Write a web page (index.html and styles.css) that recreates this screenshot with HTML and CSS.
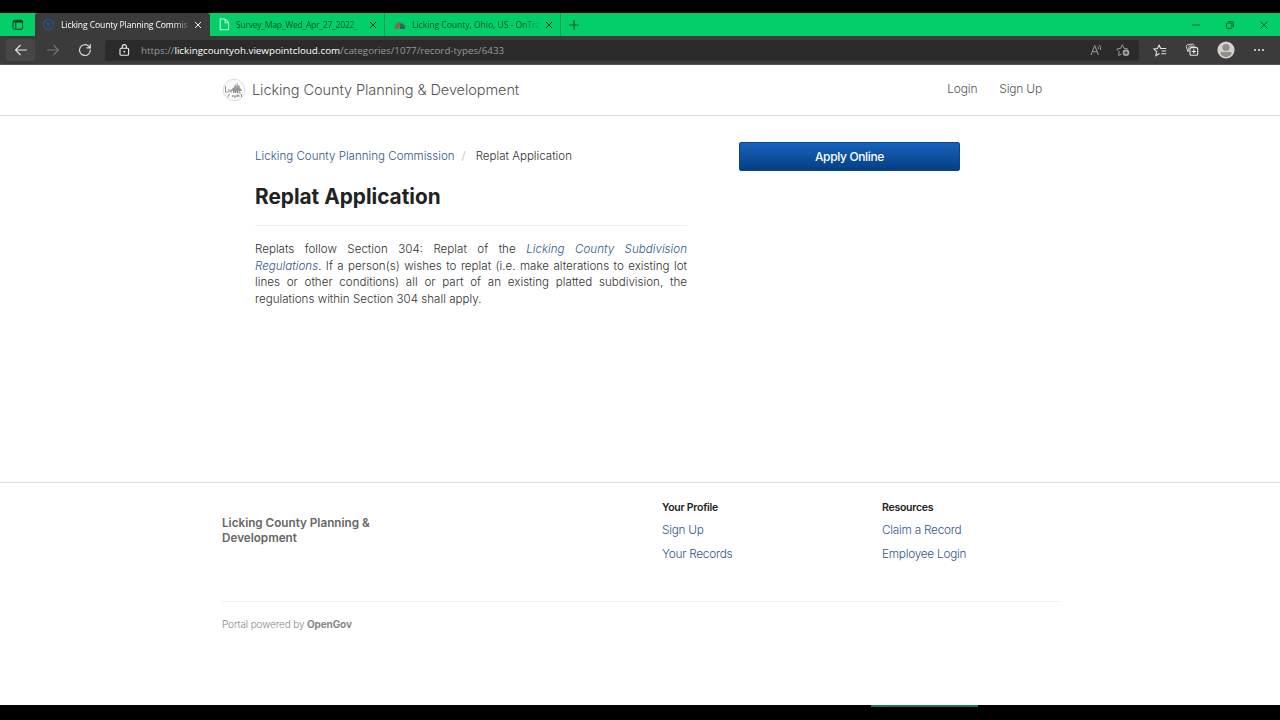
FILE: index.html
```html
<!DOCTYPE html>
<html lang="en">
<head>
  <meta charset="UTF-8" />
  <meta name="viewport" content="width=device-width, initial-scale=1.0"/>
  <title>Licking County Planning Commission</title>

  <link rel="stylesheet" href="styles.css">
</head>

<body>

<!-- TABS -->
<div class="tabs">
  <div class="tab-menu">
    <svg width="12" height="12" viewBox="0 0 12 12"><rect x="1" y="1.3" width="9.6" height="9" rx="1.5" fill="none" stroke="#083d20" stroke-width="1"/><path d="M1 2.6h9.6" stroke="#083d20" stroke-width="2"/><path d="M3.8 3.5v6.5" stroke="#083d20" stroke-width=".9"/></svg>
  </div>

  <div class="tab active">
    <svg class="favicon" width="13" height="13" viewBox="0 0 13 13"><circle cx="6.5" cy="6.5" r="5.1" fill="none" stroke="#25508c" stroke-width="1.4"/><path d="M4 4.8h5L6.5 9z" fill="#25508c"/></svg>
    <span class="tab-title">Licking County Planning Commis</span>
    <svg class="close" width="8" height="8" viewBox="0 0 8 8"><path d="M1 1l6 6M7 1l-6 6" stroke="#eee" stroke-width="1"/></svg>
  </div>

  <div class="tab second">
    <svg class="favicon" width="11" height="13" viewBox="0 0 11 13"><path d="M1.2 1h5l3.4 3.4v7.4H1.2zM6 1v3.7h3.6" fill="none" stroke="#b9f5cf" stroke-width="1.1"/></svg>
    <span class="tab-title">Survey_Map_Wed_Apr_27_2022_</span>
    <svg class="close" width="8" height="8" viewBox="0 0 8 8"><path d="M1 1l6 6M7 1l-6 6" stroke="#07381d" stroke-width="1"/></svg>
  </div>

  <div class="tab third">
    <svg class="favicon" width="13" height="10" viewBox="0 0 13 10"><path d="M1 8.8C2 5 4 2.5 6.8 1.5L5.5 8.8z" fill="#79704a"/><path d="M3.2 8.8L6 3.6M5.4 8.8l1.8-6" stroke="#b34f4a"/><path d="M7 8.8V4l2-1 3 3v2.8z" fill="#217448"/><path d="M7.5 8.3h4.5" stroke="#345282" stroke-width="1.3"/></svg>
    <span class="tab-title">Licking County, Ohio, US - OnTra</span>
    <svg class="close" width="8" height="8" viewBox="0 0 8 8"><path d="M1 1l6 6M7 1l-6 6" stroke="#07381d" stroke-width="1"/></svg>
  </div>

  <svg class="new-tab" width="10" height="10" viewBox="0 0 10 10"><path d="M5 0v10M0 5h10" stroke="#0a5a2e" stroke-width="1.1"/></svg>

  <div class="window-buttons">
    <svg width="8" height="8" viewBox="0 0 8 8"><path d="M0 4h8" stroke="#075f2d"/></svg>
    <svg width="8" height="8" viewBox="0 0 8 8"><rect x=".6" y="2" width="5.4" height="5.4" rx="1" fill="none" stroke="#075f2d"/><path d="M2 .7h4q1.4 0 1.4 1.4v4" fill="none" stroke="#075f2d"/></svg>
    <svg width="8" height="8" viewBox="0 0 8 8"><path d="M.5.5l7 7M7.5.5l-7 7" stroke="#075f2d"/></svg>
  </div>
</div>

<!-- TOOLBAR -->
<div class="toolbar">
  <div class="tool back">
    <svg width="14" height="12" viewBox="0 0 14 12"><path d="M13 6H1.5M6.500 1l-5 5 5 5" fill="none" stroke="#e4e4e4" stroke-width="1.1"/></svg>
  </div>
  <div class="tool forward">
    <svg width="14" height="12" viewBox="0 0 14 12"><path d="M1 6h11.5M7.500 1l5 5-5 5" fill="none" stroke="#757575" stroke-width="1.1"/></svg>
  </div>
  <div class="tool reload">
    <svg width="14" height="14" viewBox="0 0 14 14"><path d="M12.3 6.500A5.400 5.400 0 1 1 10.7 3.200L12 4.500M12.3 1v3.900H8.500" fill="none" stroke="#e4e4e4" stroke-width="1.1"/></svg>
  </div>

  <div class="address">
    <svg class="lock" width="11" height="12" viewBox="0 0 11 12"><rect x="1" y="4.200" width="8.600" height="7" rx="1" fill="none" stroke="#eee" stroke-width="1.1"/><path d="M3.200 4V2.700a2.100 2.100 0 0 1 4.200 0V4" fill="none" stroke="#eee" stroke-width="1.1"/><circle cx="5.300" cy="7.700" r=".9" fill="#eee"/></svg>
    <span class="url">https://<b>lickingcountyoh.viewpointcloud.com</b>/categories/1077/record-types/6433</span>
    <svg class="read" width="13" height="12" viewBox="0 0 13 12"><path d="M1 11L4.700 1.500l3.700 9.500M2.300 7.700h4.800M7.700 2.500q1.200 1 .5 2.700M9.300 1q2.400 2.200.9 5" fill="none" stroke="#9b9b9b"/></svg>
    <svg class="add-star" width="14" height="14" viewBox="0 0 14 14"><path d="M5.600 11l-3 1.500.6-3.800L.8 6l3.700-.6L6.300 1.700 8.100 5.400l4 .6" fill="none" stroke="#9b9b9b"/><circle cx="10" cy="9.800" r="3.300" fill="#aaa"/><path d="M10 8v3.600M8.200 9.800h3.600" stroke="#2b2b2b" stroke-width=".9"/></svg>
  </div>

  <div class="tools-right">
    <svg width="14" height="13" viewBox="0 0 14 13"><path d="M6.500 9.600l-3.600 2 .7-4L1 5l3.500-.5L6.100 1.200 7.700 4.500h5.500M8.700 7h4.500M8.200 9.700h5" fill="none" stroke="#e2e2e2" stroke-width="1.1"/></svg>
    <svg width="14" height="14" viewBox="0 0 14 14"><path d="M3 9L1.300 3.600Q1 2.400 2.200 2L7.400 1q1-.2 1.300.8M3.800 8.500V4.700q0-1.500 1.500-1.500h5" fill="none" stroke="#d5d5d5"/><rect x="5" y="4.600" width="7.700" height="7.700" rx="1.300" fill="none" stroke="#e9e9e9" stroke-width="1.1"/><path d="M8.850 6.300v4.300M6.700 8.450H11" stroke="#e9e9e9" stroke-width="1.1"/></svg>
    <svg width="18" height="18" viewBox="0 0 18 18"><circle cx="9" cy="9" r="8.600" fill="#d4d1ce"/><circle cx="9" cy="6.500" r="3.600" fill="#8f8c89"/><path d="M3.500 12.200Q3.500 11 5 11h8q1.500 0 1.500 1.200Q13 16 9 16t-5.500-3.800" fill="#8f8c89"/></svg>
    <svg width="12" height="4" viewBox="0 0 12 4"><circle cx="2" cy="2" r="1" fill="#eee"/><circle cx="6" cy="2" r="1" fill="#eee"/><circle cx="10" cy="2" r="1" fill="#eee"/></svg>
  </div>
</div>

<!-- HEADER -->
<header>
  <div class="container header-row">
    <div class="brand">
      <svg width="24" height="24" viewBox="0 0 24 24"><circle cx="12" cy="12" r="10.800" fill="#fafafa" stroke="#d5d5d5" stroke-width=".8"/><path d="M9 13l2-4 1 1 1-4 1.500 2 .5-4 1.500 4 1-1 .5 3 1.500 1 .5 2z" fill="#aaa"/><path d="M11 11h7M13 8v4M16 8v4" stroke="#888" stroke-width=".7"/><path d="M3.500 8v6h3M7 11v3M10 12q-2 0-1.500 2h1.500M11.500 11v4l2-2.500M13.500 15v-2.500l2 2.500v-3M19 12.500h-2V15h2M8 16.500q-2.500 0-2 3M10 17q1.500.5 0 2M12 17v2h2v-2M15.500 19v-2h1.500v2M19.500 16v3" fill="none" stroke="#888" stroke-width=".9"/></svg>
      <span class="brand-name">Licking County Planning &amp; Development</span>
    </div>
    <nav>
      <a href="#">Login</a>
      <a href="#">Sign Up</a>
    </nav>
  </div>
</header>

<!-- CONTENT -->
<main class="content">
  <section class="record">
    <div class="breadcrumb">
      <a href="#">Licking County Planning Commission</a>
      <span class="slash">/</span>
      <span>Replat Application</span>
    </div>
    <h1>Replat Application</h1>
    <p>Replats follow Section 304: Replat of the <a href="#"><i>Licking County Subdivision Regulations</i></a>. If a person(s) wishes to replat (i.e. make alterations to existing lot lines or other conditions) all or part of an existing platted subdivision, the regulations within Section 304 shall apply.</p>
  </section>
  <aside>
    <button>Apply Online</button>
  </aside>
</main>

<!-- FOOTER -->
<footer>
  <div class="container">
    <div class="footer-row">
      <div class="footer-name">Licking County Planning &amp; Development</div>
      <div class="footer-links">
        <h2>Your Profile</h2>
        <a href="#">Sign Up</a>
        <a href="#">Your Records</a>
      </div>
      <div class="footer-links">
        <h2>Resources</h2>
        <a href="#">Claim a Record</a>
        <a href="#">Employee Login</a>
      </div>
    </div>
    <div class="powered">Portal powered by <b>OpenGov</b></div>
  </div>
</footer>

<div class="taskbar"><div class="taskbar-line"></div></div>

</body>
</html>
```
FILE: styles.css
```css
*{
  margin:0;
  padding:0;
  box-sizing:border-box;
}

body{
  width:1280px;
  height:720px;
  padding-top:13px;
  overflow:hidden;
  display:flex;
  flex-direction:column;
  background:#000;
  color:#333;
  font-family:Inter, "Liberation Sans", sans-serif;
  font-weight:300;
}

svg{
  display:block;
  flex:none;
}

a{
  color:#30588c;
  text-decoration:none;
}

/* browser tabs */
.tabs{
  height:23px;
  flex:none;
  display:flex;
  align-items:center;
  background:#04ce69;
  font-family:"Open Sans", "Noto Sans", sans-serif;
  font-weight:400;
  font-size:8.6px;
}

.tab-menu{
  width:35px;
  padding-left:12px;
}

.tab{
  height:23px;
  display:flex;
  align-items:center;
  color:#07552a;
}

.tab.active{
  width:175px;
  padding-left:7px;
  background:#3b3b3b;
  border-radius:3px 3px 0 0;
  color:#fff;
}

.tab.second{
  width:175px;
  padding-left:9px;
  border-right:1px solid #079c4e;
}

.tab.third{
  width:176px;
  padding-left:8px;
  border-right:1px solid #079c4e;
}

.tab-title{
  width:127px;
  margin-left:6px;
  white-space:nowrap;
  letter-spacing:-0.12px;
  mask-image:linear-gradient(to right, #000 88%, rgba(0,0,0,0.2));
}

.second .tab-title{
  letter-spacing:-0.27px;
}

.third .tab-title{
  letter-spacing:-0.04px;
}

.close{
  margin-left:6px;
}

.new-tab{
  margin-left:8px;
}

.window-buttons{
  margin-left:auto;
  padding-right:12px;
  display:flex;
  gap:26px;
}

/* browser toolbar */
.toolbar{
  height:29px;
  flex:none;
  display:flex;
  align-items:center;
  padding-left:6px;
  background:#3b3b3b;
  border-bottom:1px solid #555;
}

.tool{
  height:22px;
  display:flex;
  align-items:center;
  justify-content:center;
}

.back{
  width:29px;
  background:#464646;
  border-radius:2px;
}

.forward{
  width:36px;
}

.reload{
  width:28px;
}

.address{
  width:1034px;
  flex:none;
  height:21px;
  margin-left:6px;
  padding:0 9px 0 14px;
  display:flex;
  align-items:center;
  background:#2b2b2b;
  border-radius:3px;
}

.url{
  margin-left:11px;
  color:#999;
  font-family:"Open Sans", "Noto Sans", sans-serif;
  font-size:9.8px;
  font-weight:400;
  white-space:nowrap;
}

.url b{
  color:#fff;
  font-weight:400;
}

.read{
  margin-left:auto;
}

.add-star{
  margin-left:13px;
}

.tools-right{
  display:flex;
  align-items:center;
  gap:18px;
  margin-left:14px;
}

/* header */
header{
  height:51px;
  flex:none;
  background:#fff;
  border-bottom:1px solid #dedede;
}

.container{
  width:838px;
  margin-left:222px;
}

.header-row{
  height:50px;
  display:flex;
  align-items:center;
  justify-content:space-between;
}

.brand{
  display:flex;
  align-items:center;
}

.brand-name{
  margin-left:6px;
  color:#555;
  font-size:14.6px;
  letter-spacing:-0.12px;
}

nav{
  display:flex;
  gap:22px;
  padding:0 18px 3px 0;
  font-size:12px;
  letter-spacing:-0.2px;
}

nav a{
  color:#555;
}

/* content */
.content{
  height:366px;
  flex:none;
  display:flex;
  align-items:flex-start;
  padding:26px 0 0 255px;
  background:#fff;
}

.record{
  width:432px;
}

.breadcrumb{
  height:27px;
  display:flex;
  align-items:center;
  font-size:11.55px;
}

.slash{
  margin:0 10px 0 7px;
  color:#bbb;
}

h1{
  height:57px;
  padding-top:14px;
  color:#222;
  font-size:20.8px;
  font-weight:700;
  line-height:28px;
  border-bottom:1px solid #eee;
}

p{
  margin-top:15px;
  font-size:11.6px;
  line-height:16.7px;
  text-align:justify;
}

aside{
  margin-left:52px;
}

button{
  display:block;
  width:221px;
  height:29px;
  padding-bottom:1px;
  background:linear-gradient(#1762bd, #053f84);
  border:1px solid #0b438a;
  border-radius:2px;
  color:#fff;
  font-family:inherit;
  font-size:12px;
  font-weight:500;
  letter-spacing:-0.35px;
}

/* footer */
footer{
  height:223px;
  flex:none;
  background:#fff;
  border-top:1px solid #dedede;
}

.footer-row{
  height:119px;
  display:flex;
  border-bottom:1px solid #f0f0f0;
}

.footer-name{
  width:440px;
  flex:none;
  padding:33px 270px 0 0;
  color:#666;
  font-size:11.7px;
  font-weight:600;
  line-height:15px;
}

.footer-links{
  width:220px;
  flex:none;
  padding-top:18px;
  font-size:11.8px;
  letter-spacing:-0.25px;
}

.footer-links h2{
  color:#222;
  font-size:10.5px;
  font-weight:600;
  line-height:14px;
  margin-bottom:3px;
}

.footer-links a{
  display:block;
  line-height:24px;
}

.powered{
  margin-top:15px;
  color:#888;
  font-size:10px;
  line-height:14px;
  letter-spacing:-0.13px;
}

.powered b{
  font-weight:700;
}

.taskbar{
  height:15px;
  flex:none;
  padding-left:871px;
}

.taskbar-line{
  width:107px;
  height:2px;
  background:#1c7650;
}
```
